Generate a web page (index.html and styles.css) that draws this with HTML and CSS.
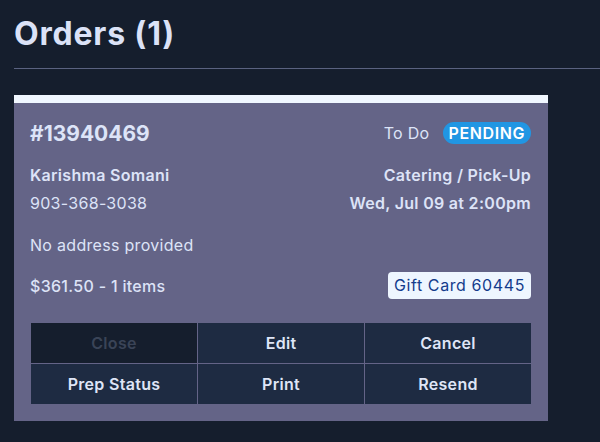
FILE: index.html
```html
<!DOCTYPE html>
<html>
<head>
<meta charset="utf-8">
<link rel="stylesheet" href="styles.css">
</head>
<body>
<div class="page">
  <h1 class="title">Orders (1)</h1>
  <div class="rule"></div>
  <div class="card">
    <div class="row head">
      <div class="order-no">#13940469</div>
      <div class="status">
        <span class="todo">To Do</span>
        <span class="badge">PENDING</span>
      </div>
    </div>
    <div class="row info">
      <div class="col">
        <div class="strong">Karishma Somani</div>
        <div>903-368-3038</div>
      </div>
      <div class="col right">
        <div class="strong">Catering / Pick-Up</div>
        <div class="strong">Wed, Jul 09 at 2:00pm</div>
      </div>
    </div>
    <div class="address">No address provided</div>
    <div class="row price">
      <div class="total">$361.50 - 1 items</div>
      <div class="gift">Gift Card 60445</div>
    </div>
    <div class="actions">
      <button class="btn disabled">Close</button>
      <button class="btn">Edit</button>
      <button class="btn">Cancel</button>
      <button class="btn">Prep Status</button>
      <button class="btn">Print</button>
      <button class="btn">Resend</button>
    </div>
  </div>
</div>
</body>
</html>
```

FILE: styles.css
```css
* { box-sizing: border-box; }
html, body {
  margin: 0;
  padding: 0;
  background: #151e2d;
  height: 100%;
}
body {
  font-family: "Inter", "Open Sans", sans-serif;
  color: #dde3f7;
  letter-spacing: 0.3px;
}
.page {
  padding: 14px 0 0 14px;
}
.title {
  margin: 0;
  font-size: 32px;
  line-height: 40px;
  font-weight: 700;
  color: #dbe2f7;
  letter-spacing: 0.8px;
}
.rule {
  height: 1px;
  background: #5a6280;
  margin-top: 14px;
}
.card {
  width: 534px;
  margin-top: 26px;
  background: #646487;
  border-top: 8px solid #f0f7ff;
  padding: 19px 17px 17px 16px;
}
.row {
  display: flex;
  justify-content: space-between;
  align-items: center;
}
.head { height: 22px; }
.order-no {
  font-size: 21px;
  font-weight: 700;
  color: #dde4f8;
  letter-spacing: 0;
}
.status {
  display: flex;
  align-items: center;
  gap: 13px;
}
.todo {
  font-size: 16px;
  color: #dde4f8;
}
.badge {
  background: #2196e3;
  color: #ffffff;
  font-size: 16px;
  font-weight: 600;
  height: 22px;
  line-height: 22px;
  padding: 0 6px;
  border-radius: 11px;
  letter-spacing: 0.6px;
}
.info {
  margin-top: 17px;
  align-items: flex-start;
  font-size: 16px;
  line-height: 28px;
}
.col.right { text-align: right; }
.strong { font-weight: 600; }
.address {
  margin-top: 14px;
  font-size: 16px;
  line-height: 28px;
}
.price {
  margin-top: 13px;
  height: 27px;
}
.total {
  font-size: 16px;
  font-weight: 500;
}
.gift {
  background: #eef6ff;
  color: #143c8c;
  font-size: 16px;
  height: 27px;
  line-height: 27px;
  padding: 0 6px;
  border-radius: 4px;
  letter-spacing: 0.6px;
}
.actions {
  margin-top: 24px;
  margin-left: 1px;
  display: grid;
  grid-template-columns: repeat(3, 1fr);
  grid-auto-rows: 40px;
  gap: 1px;
}
.btn {
  border: none;
  margin: 0;
  background: #1e2b42;
  color: #dfe5f6;
  font-family: inherit;
  font-size: 16px;
  font-weight: 600;
  letter-spacing: 0.3px;
  padding: 0;
}
.btn.disabled {
  background: #151e2d;
  color: #3a4457;
}
```
